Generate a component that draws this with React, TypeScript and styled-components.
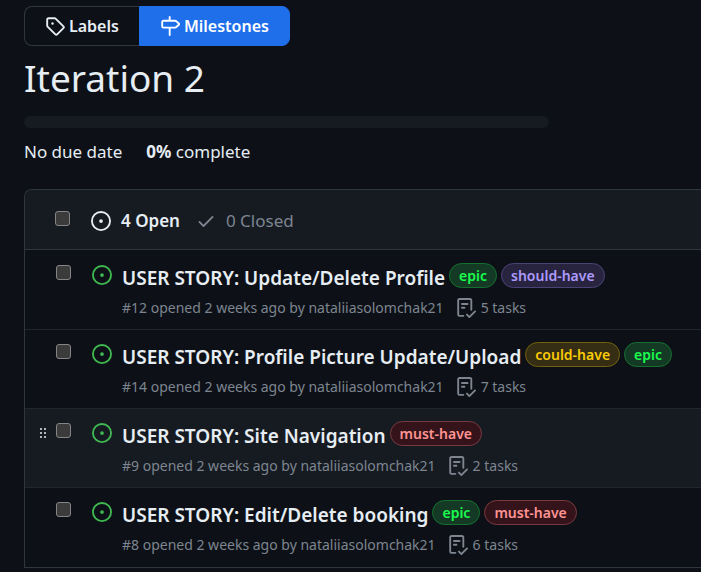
import React from "react";
import styled, { createGlobalStyle, css } from "styled-components";

const GlobalStyle = createGlobalStyle`
  *, *::before, *::after { box-sizing: border-box; }
  body {
    margin: 0;
    background: #0d1117;
    color: #e6edf3;
    font-family: "Noto Sans", "Open Sans", sans-serif;
    font-size: 17px;
    line-height: 24px;
  }
  a { color: inherit; text-decoration: none; }
`;

const iconPaths = {
  tag: "M1 7.775V2.75C1 1.784 1.784 1 2.75 1h5.025c.464 0 .91.184 1.238.513l6.25 6.25a1.75 1.75 0 0 1 0 2.474l-5.026 5.026a1.75 1.75 0 0 1-2.474 0l-6.25-6.25A1.752 1.752 0 0 1 1 7.775Zm1.5 0c0 .066.026.13.073.177l6.25 6.25a.25.25 0 0 0 .354 0l5.025-5.025a.25.25 0 0 0 0-.354l-6.25-6.25a.25.25 0 0 0-.177-.073H2.75a.25.25 0 0 0-.25.25ZM6 5a1 1 0 1 1 0 2 1 1 0 0 1 0-2Z",
  milestone:
    "M7.75 0a.75.75 0 0 1 .75.75V3h3.634c.414 0 .814.147 1.13.414l2.07 1.75a1.75 1.75 0 0 1 0 2.672l-2.07 1.75a1.75 1.75 0 0 1-1.13.414H8.5v5.25a.75.75 0 0 1-1.5 0V10H2.75A1.75 1.75 0 0 1 1 8.25v-3.5C1 3.784 1.784 3 2.75 3H7V.75A.75.75 0 0 1 7.75 0Zm4.384 8.5a.25.25 0 0 0 .161-.06l2.07-1.75a.248.248 0 0 0 0-.38l-2.07-1.75a.25.25 0 0 0-.161-.06H2.75a.25.25 0 0 0-.25.25v3.5c0 .138.112.25.25.25h9.384Z",
  open: "M8 9.5a1.5 1.5 0 1 0 0-3 1.5 1.5 0 0 0 0 3ZM8 0a8 8 0 1 1 0 16A8 8 0 0 1 8 0ZM1.5 8a6.5 6.5 0 1 0 13 0 6.5 6.5 0 0 0-13 0Z",
  check:
    "M13.78 4.22a.75.75 0 0 1 0 1.06l-7.25 7.25a.75.75 0 0 1-1.06 0L2.22 9.28a.751.751 0 0 1 .018-1.042.751.751 0 0 1 1.042-.018L6 10.94l6.72-6.72a.75.75 0 0 1 1.06 0Z",
  checklist:
    "M2.5 1.75v11.5c0 .138.112.25.25.25h3.17a.75.75 0 0 1 0 1.5H2.75A1.75 1.75 0 0 1 1 13.25V1.75C1 .784 1.784 0 2.75 0h8.5C12.216 0 13 .784 13 1.75v7.736a.75.75 0 0 1-1.5 0V1.75a.25.25 0 0 0-.25-.25h-8.5a.25.25 0 0 0-.25.25Zm13.274 9.537v-.001l-4.557 4.45a.75.75 0 0 1-1.055-.008l-1.943-1.95a.75.75 0 0 1 1.062-1.058l1.419 1.425 4.026-3.932a.75.75 0 1 1 1.048 1.074ZM4.75 4h4.5a.75.75 0 0 1 0 1.5h-4.5a.75.75 0 0 1 0-1.5ZM4 7.75A.75.75 0 0 1 4.75 7h2a.75.75 0 0 1 0 1.5h-2A.75.75 0 0 1 4 7.75Z",
  grip: "M10 13a1 1 0 1 1 0-2 1 1 0 0 1 0 2Zm0-4a1 1 0 1 1 0-2 1 1 0 0 1 0 2Zm-4 4a1 1 0 1 1 0-2 1 1 0 0 1 0 2Zm5-9a1 1 0 1 1-2 0 1 1 0 0 1 2 0ZM7 8a1 1 0 1 1-2 0 1 1 0 0 1 2 0ZM6 5a1 1 0 1 1 0-2 1 1 0 0 1 0 2Z",
};

const Svg = styled.svg`
  display: block;
  flex: none;
  fill: currentColor;
`;

function Icon({ name, size = 20 }: { name: keyof typeof iconPaths; size?: number }) {
  return (
    <Svg width={size} height={size} viewBox="0 0 16 16" aria-hidden="true">
      <path d={iconPaths[name]} />
    </Svg>
  );
}

const Page = styled.main`
  padding: 6px 0 4px 24px;
`;

const SubNav = styled.nav`
  display: flex;
`;

const NavLink = styled.a<{ $active?: boolean }>`
  display: flex;
  align-items: center;
  gap: 4px;
  height: 40px;
  padding: 0 20px;
  border: 1px solid #30363d;
  font-size: 16px;
  font-weight: 600;
  &:first-child { border-radius: 8px 0 0 8px; border-right: 0; }
  &:last-child { border-radius: 0 8px 8px 0; }
  ${(p) => p.$active && css`
    background: #1f6feb;
    border-color: #1f6feb;
    color: #ffffff;
  `}
`;

const Heading = styled.h1`
  margin: 6px 0 13px;
  font-size: 37px;
  line-height: 51px;
  font-weight: 400;
`;

const Progress = styled.div`
  width: 78%;
  max-width: 525px;
  height: 12px;
  border-radius: 6px;
  background: #161b22;
`;

const Stats = styled.div`
  display: flex;
  gap: 24px;
  margin: 12px 0 25px;
`;

const List = styled.section`
  border: 1px solid #30363d;
  border-right: 0;
  border-top-left-radius: 8px;
  overflow: hidden;
`;

const ListHeader = styled.header`
  display: flex;
  align-items: center;
  height: 59px;
  padding: 2px 20px 0 30px;
  background: #161b22;
`;

const Checkbox = styled.input`
  appearance: none;
  flex: none;
  width: 15px;
  height: 15px;
  margin: 0;
  border: 1px solid #858585;
  border-radius: 3px;
  background: #3b3b3b;
  &:checked { background: #1f6feb; }
`;

const HeaderCheckbox = styled(Checkbox)`
  margin: 0 21px 4px 0;
`;

const StateLink = styled.a<{ $active?: boolean }>`
  display: flex;
  align-items: center;
  gap: 10px;
  margin-right: 16px;
  color: ${(p) => (p.$active ? "#e6edf3" : "#7d8590")};
  font-weight: ${(p) => (p.$active ? 600 : 400)};
`;

const Rows = styled.ul`
  margin: 0;
  padding: 0;
  list-style: none;
`;

const Row = styled.li<{ $hovered?: boolean }>`
  display: flex;
  align-items: flex-start;
  min-height: 79px;
  padding-left: 10px;
  border-top: 1px solid #21262d;
  background: ${(p) => (p.$hovered ? "#161b22" : "transparent")};
  &:first-child {
    min-height: 80px;
    padding-top: 1px;
    border-top-color: #30363d;
  }
  &:last-child { min-height: 80px; }
`;

const Grip = styled.span`
  width: 21px;
  padding-top: 16px;
`;

const RowCheck = styled.div`
  display: flex;
  width: 36px;
  padding-top: 14px;
`;

const RowState = styled.div`
  width: 30px;
  padding-top: 14px;
  color: #3fb950;
`;

const RowBody = styled.div`
  flex: 1;
  min-width: 0;
  padding: 12px 10px 6px 0;
`;

const TitleLine = styled.div`
  display: flex;
  align-items: flex-start;
  flex-wrap: wrap;
  gap: 4px;
`;

const Title = styled.a`
  padding-top: 1px;
  font-size: 19px;
  line-height: 28px;
  font-weight: 600;
`;

const tones = {
  green: css`color: #1bfc4e; background: #143a25; border-color: #13702f;`,
  purple: css`color: #ae9afd; background: #282440; border-color: #4a4376;`,
  yellow: css`color: #fbca04; background: #352e14; border-color: #72600e;`,
  red: css`color: #ff9492; background: #35131a; border-color: #763a40;`,
};

const Label = styled.a<{ $tone: keyof typeof tones }>`
  padding: 0 9px;
  border: 1px solid;
  border-radius: 13px;
  font-size: 14px;
  line-height: 23px;
  font-weight: 600;
  ${(p) => tones[p.$tone]}
`;

const Meta = styled.div`
  display: flex;
  align-items: center;
  gap: 12px;
  margin-top: 6px;
  color: #7d8590;
  font-size: 14px;
  line-height: 20px;
`;

const Tasks = styled.span`
  display: flex;
  align-items: center;
  gap: 5px;
`;

type Tag = [string, keyof typeof tones];
const epic: Tag = ["epic", "green"];
const must: Tag = ["must-have", "red"];

const issues: { id: number; title: string; tags: Tag[]; tasks: number; hovered?: boolean }[] = [
  { id: 12, title: "USER STORY: Update/Delete Profile", tags: [epic, ["should-have", "purple"]], tasks: 5 },
  { id: 14, title: "USER STORY: Profile Picture Update/Upload", tags: [["could-have", "yellow"], epic], tasks: 7 },
  { id: 9, title: "USER STORY: Site Navigation", tags: [must], tasks: 2, hovered: true },
  { id: 8, title: "USER STORY: Edit/Delete booking", tags: [epic, must], tasks: 6 },
];

export default function App() {
  return (
    <>
      <GlobalStyle />
      <Page>
        <SubNav>
          <NavLink href="#labels"><Icon name="tag" />Labels</NavLink>
          <NavLink href="#milestones" $active><Icon name="milestone" />Milestones</NavLink>
        </SubNav>
        <Heading>Iteration 2</Heading>
        <Progress role="progressbar" aria-label="Milestone progress" aria-valuenow={0} />
        <Stats>
          <span>No due date</span>
          <span><strong>0%</strong> complete</span>
        </Stats>
        <List>
          <ListHeader>
            <HeaderCheckbox type="checkbox" aria-label="Select all issues" />
            <StateLink href="#open" $active><Icon name="open" />4 Open</StateLink>
            <StateLink href="#closed"><Icon name="check" />0 Closed</StateLink>
          </ListHeader>
          <Rows>
            {issues.map((issue) => (
              <Row key={issue.id} $hovered={issue.hovered}>
                <Grip>{issue.hovered && <Icon name="grip" size={16} />}</Grip>
                <RowCheck>
                  <Checkbox type="checkbox" aria-label={`Select issue ${issue.id}`} />
                </RowCheck>
                <RowState><Icon name="open" /></RowState>
                <RowBody>
                  <TitleLine>
                    <Title href={`#issue-${issue.id}`}>{issue.title}</Title>
                    {issue.tags.map(([name, tone]) => (
                      <Label key={name} href={`#${name}`} $tone={tone}>{name}</Label>
                    ))}
                  </TitleLine>
                  <Meta>
                    <span>#{issue.id} opened 2 weeks ago by <a href="#author">nataliiasolomchak21</a></span>
                    <Tasks><Icon name="checklist" />{issue.tasks} tasks</Tasks>
                  </Meta>
                </RowBody>
              </Row>
            ))}
          </Rows>
        </List>
      </Page>
    </>
  );
}
